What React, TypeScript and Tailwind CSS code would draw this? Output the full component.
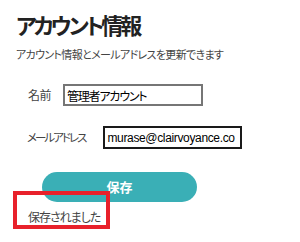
import React from 'react';

const jp = "font-['Noto_Sans_CJK_JP','Noto_Sans',sans-serif] [font-feature-settings:'palt']";

export default function App() {
  return (
    <div className={`w-[300px] h-[242px] bg-white pt-[8px] pl-4 overflow-hidden ${jp}`}>
      <h1 className="text-[22px] leading-[32px] font-bold tracking-[-3px] text-[#222]">アカウント情報</h1>
      <p className="mt-[6px] text-[11px] leading-[16px] tracking-[-0.65px] text-[#444]">
        アカウント情報とメールアドレスを更新できます
      </p>

      <div className="mt-[22px] ml-[12px] flex items-center gap-[12px]">
        <span className="text-[12px] tracking-[-0.5px] text-[#444]">名前</span>
        <input
          readOnly
          value="管理者アカウント"
          className={`w-[140px] h-[22px] px-[2px] border-2 border-[#767676] text-[12px] tracking-[-1.2px] text-black outline-none ${jp}`}
        />
      </div>

      <div className="mt-[20px] ml-[11px] flex items-center gap-[18px]">
        <span className="text-[11.5px] tracking-[-2px] text-[#444]">メールアドレス</span>
        <input
          readOnly
          value="murase@clairvoyance.co"
          className="w-[139px] h-[23px] px-[2px] border-2 border-[#1a1a1a] text-[12px] tracking-[-0.35px] text-black outline-none font-['Liberation_Sans',sans-serif]"
        />
      </div>

      <button className="mt-[23px] ml-[26px] w-[155px] h-[30px] rounded-full bg-[#3aafb6] text-white text-[13px] font-bold">
        保存
      </button>

      <div className="relative mt-[1px] ml-[12px] w-fit">
        <span className="text-[12px] leading-[16px] tracking-[-1px] text-[#444]">保存されました</span>
        <div className="absolute left-[-15px] top-[-12px] w-[97px] h-[38px] border-4 border-[#e8212b]" />
      </div>
    </div>
  );
}
